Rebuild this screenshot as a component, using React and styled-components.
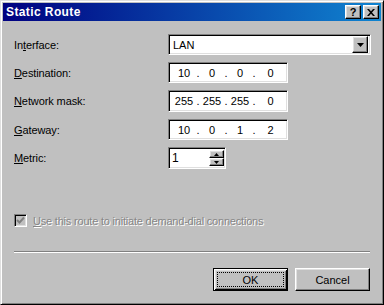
import React from "react";
import styled, { createGlobalStyle } from "styled-components";

const GlobalStyle = createGlobalStyle`
  html, body {
    margin: 0;
    padding: 0;
    background: #c0c0c0;
  }
  body {
    font-family: "Liberation Sans", Arial, sans-serif;
    font-size: 11px;
    color: #000;
  }
`;

const raised = `
  border-top: 1px solid #fff;
  border-left: 1px solid #fff;
  border-right: 1px solid #000;
  border-bottom: 1px solid #000;
  box-shadow: inset -1px -1px #808080, inset 1px 1px #dfdfdf;
`;

const sunken = `
  border-top: 1px solid #808080;
  border-left: 1px solid #808080;
  border-right: 1px solid #fff;
  border-bottom: 1px solid #fff;
  box-shadow: inset 1px 1px #000, inset -1px -1px #dfdfdf;
`;

const Window = styled.div`
  box-sizing: border-box;
  width: 384px;
  height: 305px;
  padding: 3px;
  background: #c0c0c0;
  border-top: 1px solid #dfdfdf;
  border-left: 1px solid #dfdfdf;
  border-right: 1px solid #000;
  border-bottom: 1px solid #000;
  box-shadow: inset 1px 1px #fff, inset -1px -1px #808080;
  display: flex;
  flex-direction: column;
`;

const TitleBar = styled.div`
  height: 18px;
  margin: -1px -1px 0 -1px;
  display: flex;
  align-items: center;
  padding: 0 2px 0 3px;
  background: linear-gradient(to right, #000080, #1084d0);
`;

const Title = styled.div`
  flex: 1;
  color: #fff;
  font-weight: bold;
  font-size: 12px;
  letter-spacing: 0.4px;
`;

const TitleButton = styled.div`
  box-sizing: border-box;
  width: 16px;
  height: 14px;
  margin-left: ${(p) => (p.$gap ? "2px" : "0")};
  background: #c0c0c0;
  ${raised}
  display: flex;
  align-items: center;
  justify-content: center;
  font-weight: bold;
  font-size: 11px;
  line-height: 1;
`;

const Body = styled.div`
  flex: 1;
  display: flex;
  flex-direction: column;
  padding: 13px 10px 0 10px;
`;

const FormGrid = styled.div`
  display: grid;
  grid-template-columns: 154px 1fr;
  grid-template-rows: 21px 21px 22px 21px 22px;
  row-gap: 7px;
  align-items: center;
`;

const Label = styled.label`
  white-space: nowrap;
  letter-spacing: -0.1px;
  u {
    text-decoration: underline;
  }
`;

const Combo = styled.div`
  box-sizing: border-box;
  width: 203px;
  height: 21px;
  background: #fff;
  ${sunken}
  display: flex;
  align-items: center;
  padding: 2px;
`;

const ComboText = styled.div`
  flex: 1;
  padding-left: 2px;
`;

const DropButton = styled.div`
  box-sizing: border-box;
  width: 16px;
  height: 17px;
  background: #c0c0c0;
  ${raised}
  display: flex;
  align-items: center;
  justify-content: center;
`;

const IpField = styled.div`
  box-sizing: border-box;
  width: 120px;
  height: 100%;
  background: #fff;
  ${sunken}
  display: flex;
  align-items: center;
  padding: 0 0 0 3px;
`;

const Octet = styled.span`
  width: ${(p) => (p.$last ? "29px" : "24px")};
  text-align: center;
`;

const Dot = styled.span`
  width: 4px;
  text-align: center;
`;

const SpinBox = styled.div`
  box-sizing: border-box;
  width: 58px;
  height: 100%;
  background: #fff;
  ${sunken}
  display: flex;
  align-items: stretch;
  padding: 2px 1px 2px 2px;
`;

const SpinText = styled.div`
  flex: 1;
  display: flex;
  align-items: center;
  padding-left: 1px;
  font-size: 12px;
`;

const SpinButtons = styled.div`
  width: 15px;
  display: flex;
  flex-direction: column;
`;

const SpinButton = styled.div`
  box-sizing: border-box;
  flex: 1;
  background: #c0c0c0;
  ${raised}
  display: flex;
  align-items: center;
  justify-content: center;
`;

const CheckRow = styled.div`
  margin-top: 45px;
  display: flex;
  align-items: center;
  gap: 6px;
`;

const CheckBox = styled.div`
  box-sizing: border-box;
  width: 13px;
  height: 13px;
  background: #c0c0c0;
  ${sunken}
  display: flex;
  align-items: center;
  justify-content: center;
`;

const DisabledText = styled.span`
  color: #868686;
  letter-spacing: -0.2px;
  text-shadow: 1px 1px 0 #fff;
`;

const Separator = styled.div`
  margin-top: 24px;
  height: 0;
  border-top: 1px solid #808080;
  border-bottom: 1px solid #fff;
`;

const ButtonRow = styled.div`
  margin-top: 15px;
  display: flex;
  justify-content: flex-end;
  gap: 7px;
`;

const Button = styled.div`
  box-sizing: border-box;
  width: 75px;
  height: 23px;
  background: #c0c0c0;
  display: flex;
  align-items: center;
  justify-content: center;
  position: relative;
  ${(p) =>
    p.$default
      ? `
    border: 1px solid #000;
    box-shadow: inset 1px 1px #fff, inset -1px -1px #000, inset 2px 2px #dfdfdf, inset -2px -2px #808080;
  `
      : raised}
`;

const FocusRect = styled.div`
  position: absolute;
  inset: 3px;
  border: 1px dotted #000;
`;

const Arrow = ({ dir = "down", size = 7 }) => {
  const h = Math.ceil(size / 2);
  const points =
    dir === "down"
      ? `0,0 ${size},0 ${size / 2},${h}`
      : `${size / 2},0 ${size},${h} 0,${h}`;
  return (
    <svg width={size} height={h} viewBox={`0 0 ${size} ${h}`}>
      <polygon points={points} fill="#000" />
    </svg>
  );
};

const Ip = ({ parts }) => (
  <IpField>
    {parts.map((p, i) => (
      <React.Fragment key={i}>
        <Octet $last={i === 3}>{p}</Octet>
        {i < 3 && <Dot>.</Dot>}
      </React.Fragment>
    ))}
  </IpField>
);

const App = () => {
  return (
    <>
      <GlobalStyle />
      <Window>
        <TitleBar>
          <Title>Static Route</Title>
          <TitleButton>?</TitleButton>
          <TitleButton $gap>
            <svg width="8" height="7" viewBox="0 0 8 7">
              <path d="M0 0h2l2 2.2L6 0h2L5 3.5 8 7H6L4 4.8 2 7H0l3-3.5z" fill="#000" />
            </svg>
          </TitleButton>
        </TitleBar>
        <Body>
          <FormGrid>
            <Label>In<u>t</u>erface:</Label>
            <Combo>
              <ComboText>LAN</ComboText>
              <DropButton>
                <Arrow dir="down" />
              </DropButton>
            </Combo>

            <Label><u>D</u>estination:</Label>
            <Ip parts={["10", "0", "0", "0"]} />

            <Label><u>N</u>etwork mask:</Label>
            <Ip parts={["255", "255", "255", "0"]} />

            <Label><u>G</u>ateway:</Label>
            <Ip parts={["10", "0", "1", "2"]} />

            <Label><u>M</u>etric:</Label>
            <SpinBox>
              <SpinText>1</SpinText>
              <SpinButtons>
                <SpinButton>
                  <Arrow dir="up" size={5} />
                </SpinButton>
                <SpinButton>
                  <Arrow dir="down" size={5} />
                </SpinButton>
              </SpinButtons>
            </SpinBox>
          </FormGrid>

          <CheckRow>
            <CheckBox>
              <svg width="9" height="9" viewBox="0 0 9 9">
                <polyline points="1,4 3.5,6.5 8,1.5" fill="none" stroke="#808080" strokeWidth="2" />
              </svg>
            </CheckBox>
            <DisabledText>
              <u>U</u>se this route to initiate demand-dial connections
            </DisabledText>
          </CheckRow>

          <Separator />

          <ButtonRow>
            <Button $default>
              <FocusRect />
              OK
            </Button>
            <Button>Cancel</Button>
          </ButtonRow>
        </Body>
      </Window>
    </>
  );
};

export default App;
